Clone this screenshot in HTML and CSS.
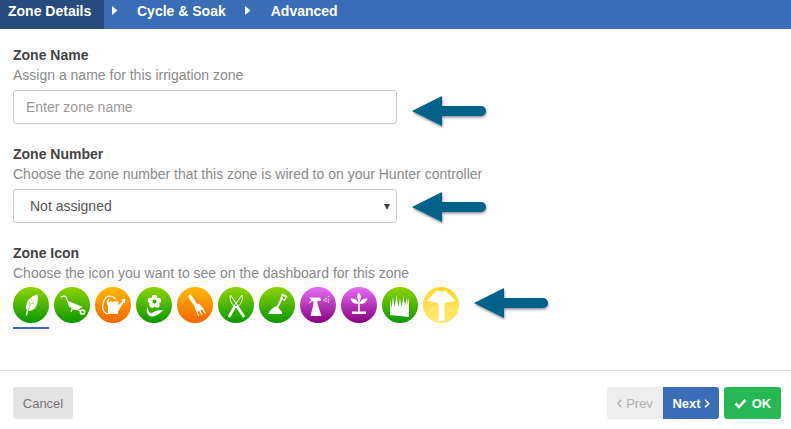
FILE: index.html
```html
<!DOCTYPE html>
<html lang="en">
<head>
<meta charset="utf-8">
<title>Zone Details</title>
<link rel="stylesheet" href="styles.css">
</head>
<body>
<svg class="defs" width="0" height="0" aria-hidden="true">
  <defs>
    <linearGradient id="green" x1="0" y1="0" x2="0" y2="1"><stop offset="0" stop-color="#8fd400"/><stop offset="1" stop-color="#0a9700"/></linearGradient>
    <linearGradient id="orange" x1="0" y1="0" x2="0" y2="1"><stop offset="0" stop-color="#ffb900"/><stop offset="1" stop-color="#f56500"/></linearGradient>
    <linearGradient id="purple" x1="0" y1="0" x2="0" y2="1"><stop offset="0" stop-color="#e86ef5"/><stop offset="1" stop-color="#85007f"/></linearGradient>
    <linearGradient id="yellow" x1="0" y1="0" x2="0" y2="1"><stop offset="0" stop-color="#ffd92a"/><stop offset="1" stop-color="#ffe96e"/></linearGradient>
    <filter id="arrowShadow" x="-20%" y="-30%" width="140%" height="170%"><feDropShadow dx="0.500" dy="1.500" stdDeviation="1.200" flood-color="#000" flood-opacity=".45"/></filter>
    <symbol id="arrow" viewBox="0 0 80 40"><path filter="url(#arrowShadow)" fill="#00628b" d="M2 20 32 5v10h39a5 5 0 0 1 0 10H32v10z"/></symbol>
  </defs>
</svg>

<nav class="tabs">
  <div class="tab tab-active">Zone Details</div>
  <svg class="chev chev-first" width="6" height="9" viewBox="0 0 6 9"><path d="M0 0l5.500 4.500L0 9z" fill="#fff"/></svg>
  <div class="tab">Cycle &amp; Soak</div>
  <svg class="chev chev-second" width="6" height="9" viewBox="0 0 6 9"><path d="M0 0l5.500 4.500L0 9z" fill="#fff"/></svg>
  <div class="tab">Advanced</div>
</nav>

<main class="form">
  <section class="field field-name">
    <h2 class="label">Zone Name</h2>
    <p class="help">Assign a name for this irrigation zone</p>
    <div class="control-row">
      <input class="control control-input" type="text" placeholder="Enter zone name">
      <svg class="arrow arrow-name" width="80" height="40"><use href="#arrow"/></svg>
    </div>
  </section>

  <section class="field field-number">
    <h2 class="label">Zone Number</h2>
    <p class="help">Choose the zone number that this zone is wired to on your Hunter controller</p>
    <div class="control-row">
      <div class="control select">Not assigned<span class="caret"></span></div>
      <svg class="arrow arrow-number" width="80" height="40"><use href="#arrow"/></svg>
    </div>
  </section>

  <section class="field field-icon">
    <h2 class="label">Zone Icon</h2>
    <p class="help">Choose the icon you want to see on the dashboard for this zone</p>
    <div class="icons">
      <div class="icon-cell icon-selected"><svg class="zone-icon" viewBox="0 0 36 36"><circle cx="18" cy="18" r="18" fill="url(#green)"/><path fill="#fff" d="M24.500 7c-6 2.500-11 6-11.500 12.500 0 2 .5 3.500 1.500 4.500 7 .5 11.500-5 10-17z"/><path fill="none" stroke="#6cc400" stroke-width=".6" d="M15 24c1.500-5 3.500-8.500 7-11.500M17 19l-.5-4M18.500 16l3 1"/><path fill="none" stroke="#fff" stroke-width="1.300" d="M14.500 23.500c-.5 2-.8 3-1 5"/></svg></div>
      <div class="icon-cell"><svg class="zone-icon" viewBox="0 0 36 36"><circle cx="18" cy="18" r="18" fill="url(#green)"/><path fill="none" stroke="#fff" stroke-width="1.200" stroke-linecap="round" d="M7 10c2-1 4-1 5 0l4 10"/><path fill="#fff" d="M14 14l15 6-6 3-5-.5z"/><path fill="none" stroke="#fff" stroke-width="1.200" d="M18 22l-1 3M23 22l4 2.500"/><circle cx="28.500" cy="25" r="2.100" fill="none" stroke="#fff" stroke-width="1.500"/></svg></div>
      <div class="icon-cell"><svg class="zone-icon" viewBox="0 0 36 36"><circle cx="18" cy="18" r="18" fill="url(#orange)"/><path fill="#fff" d="M13 14.500h10.500v4l4-4.500-1.500-1 4.500-1.500-1 5-1-1-5.500 9V27H13z"/><path fill="none" stroke="#fff" stroke-width="1.200" d="M10.500 10.500c4-2 8-1.500 10 2M13 27c-5-1-6-6-5-10 .5-3 1.500-5 3-6.500M14 12c-2 2-2 5 0 7"/></svg></div>
      <div class="icon-cell"><svg class="zone-icon" viewBox="0 0 36 36"><circle cx="18" cy="18" r="18" fill="url(#green)"/><g fill="#fff"><circle cx="18.500" cy="10.500" r="2.700"/><circle cx="22.500" cy="13.500" r="2.700"/><circle cx="21" cy="18" r="2.700"/><circle cx="16" cy="18" r="2.700"/><circle cx="14.500" cy="13.500" r="2.700"/></g><circle cx="18.500" cy="14.500" r="2" fill="#36ac00"/><path fill="#fff" d="M11.500 20c-2 5 0 9 4.500 9.500 4.500 0 8-3.500 11.500-6.500-3 .5-5 0-8 1-2 1.500-4.500 2.500-5.500 1.500-1.500-1-2-3-2.500-5.500z"/></svg></div>
      <div class="icon-cell"><svg class="zone-icon" viewBox="0 0 36 36"><circle cx="18" cy="18" r="18" fill="url(#orange)"/><path fill="none" stroke="#fff" stroke-width="3.600" stroke-linecap="round" d="M13 9.500l6.500 9.500"/><path fill="#fff" d="M17.500 20l4.500-3.500 5 5.500-7.500 3z"/><path fill="none" stroke="#fff" stroke-width="1.200" d="M20 24l1.500 5M22.500 23l2.500 5M25 21.500l3.500 5"/></svg></div>
      <div class="icon-cell"><svg class="zone-icon" viewBox="0 0 36 36"><circle cx="18" cy="18" r="18" fill="url(#green)"/><g fill="none" stroke="#fff" stroke-linecap="round"><path stroke-width="2.800" d="M19.500 20l6 9M16.500 20l-5 9"/><path stroke-width="1" d="M20 19L12.500 8c-1 4 0 9 5 12zM16 19l8-11c1 4 0 9-5 12z"/></g></svg></div>
      <div class="icon-cell"><svg class="zone-icon" viewBox="0 0 36 36"><circle cx="18" cy="18" r="18" fill="url(#green)"/><path fill="#fff" d="M9 27c2-4 5-7 9-8l5 6v2z"/><path fill="none" stroke="#fff" stroke-width="1.800" d="M18.500 20l5-10"/><path fill="none" stroke="#fff" stroke-width="1.400" d="M22 11l1.500-3.500 4 2-2 3.500z"/></svg></div>
      <div class="icon-cell"><svg class="zone-icon" viewBox="0 0 36 36"><circle cx="18" cy="18" r="18" fill="url(#purple)"/><path fill="#fff" d="M9 10.500h11l1.500 3-4 .5v3l4 12H10.500l3-12v-3l-2 .5-2 2-.5-1 2.500-2.500z"/><g fill="#fff"><circle cx="24" cy="13" r=".8"/><circle cx="26" cy="11.500" r=".8"/><circle cx="26" cy="14" r=".8"/><circle cx="28.500" cy="9.500" r=".8"/><circle cx="28.500" cy="12.500" r=".8"/><circle cx="28.500" cy="15" r=".8"/></g></svg></div>
      <div class="icon-cell"><svg class="zone-icon" viewBox="0 0 36 36"><circle cx="18" cy="18" r="18" fill="url(#purple)"/><g fill="#fff"><path d="M18 6c2.500 2 2.500 5.500 0 8.500-2.500-3-2.500-6.500 0-8.500z"/><path d="M9.500 11.500c4-.5 7 1.500 8 5-4 1-7-1-8-5zM26.500 11.500c-4-.5-7 1.500-8 5 4 1 7-1 8-5z"/><path d="M17.200 13h1.600v12h-1.600z"/><path d="M11 24.500h14V27H11z"/></g></svg></div>
      <div class="icon-cell"><svg class="zone-icon" viewBox="0 0 36 36"><circle cx="18" cy="18" r="18" fill="url(#green)"/><path fill="#fff" d="M8 28V12l1.500 9 1.500-11 1.500 10 2-12 2 12 1.500-9 1.500 9 2-11 1.500 10 2-9 .5 8 1.500-8v20z"/></svg></div>
      <div class="icon-cell"><svg class="zone-icon" viewBox="0 0 36 36"><circle cx="18" cy="18" r="18" fill="url(#yellow)"/><path fill="#fff" d="M13 4h10l9.500 10c-4 1-8 1-11 2.500V34h-6V16.500C12.500 15 8 15 3.500 14z"/><g fill="none" stroke="#fff" stroke-width=".8" stroke-dasharray="1.500 1"><path d="M7 22l6-3M8 25l5-3M29 22l-6-3M28 25l-5-3"/></g></svg></div>
      <svg class="arrow arrow-icons" width="80" height="40"><use href="#arrow"/></svg>
    </div>
  </section>
</main>

<footer class="footer">
  <button class="btn btn-cancel" type="button">Cancel</button>
  <div class="footer-right">
    <div class="btn-group">
      <button class="btn btn-prev" type="button"><svg width="5" height="9" viewBox="0 0 5 9"><path d="M4.300.8.800 4.500l3.500 3.700" fill="none" stroke="#b0b0b0" stroke-width="1.400"/></svg>Prev</button>
      <button class="btn btn-next" type="button">Next<svg width="6" height="9" viewBox="0 0 6 9"><path d="M1 .8l3.700 3.700L1 8.200" fill="none" stroke="#fff" stroke-width="1.600"/></svg></button>
    </div>
    <button class="btn btn-ok" type="button"><svg width="13" height="11" viewBox="0 0 13 11"><path d="M1.500 5.500l3.500 3.500 6.500-7" fill="none" stroke="#fff" stroke-width="2.600"/></svg>OK</button>
  </div>
</footer>
</body>
</html>
```

FILE: styles.css
```css
* { box-sizing: border-box; }
html, body { margin: 0; padding: 0; }
body {
  width: 791px;
  height: 429px;
  overflow: hidden;
  background: #fff;
  font-family: "Liberation Sans", Arial, sans-serif;
  font-size: 14px;
  color: #333;
  display: flex;
  flex-direction: column;
}
.defs { position: absolute; }

.tabs {
  height: 29px;
  flex: none;
  display: flex;
  align-items: center;
  background: #3a6db5;
  color: #fff;
  font-weight: 700;
  font-size: 14px;
}
.tab { height: 100%; display: flex; align-items: center; padding-bottom: 7px; }
.tab-active {
  width: 104px;
  padding-left: 8px;
  background: #264b7c;
}
.chev { margin-top: -9px; }
.chev-first { margin-left: 8px; margin-right: 19px; }
.chev-second { margin-left: 19px; margin-right: 20px; }

.form { flex: 1; padding: 0 13px; }
.field { display: block; }
.field-name { padding-top: 18px; }
.field-number { padding-top: 22px; }
.field-icon { padding-top: 22px; }
.label { margin: 0; font-size: 14px; line-height: 17px; font-weight: 700; color: #444; }
.help { margin: 3px 0 0; font-size: 14px; line-height: 17px; color: #8a8a8a; }

.control-row { display: flex; align-items: center; margin-top: 6px; height: 34px; }
.control {
  width: 384px;
  height: 34px;
  border: 1px solid #ccc;
  border-radius: 3px;
  padding: 0 16px;
  font: 14px "Liberation Sans", Arial, sans-serif;
  color: #555;
  background: #fff;
  outline: 0;
}
.control-input { padding-left: 12px; }
.control::placeholder { color: #999; opacity: 1; }
.select { display: flex; align-items: center; justify-content: space-between; padding-right: 6px; }
.caret { width: 0; height: 0; margin-top: 1px; border-left: 3px solid transparent; border-right: 3px solid transparent; border-top: 6px solid #444; }
.arrow { flex: none; margin-left: 13px; }
.arrow-name { margin-top: 8px; }
.arrow-number { margin-top: 2px; }

.icons { display: flex; align-items: flex-start; gap: 5px; margin-top: 5px; height: 42px; }
.icon-cell { width: 36px; height: 42px; }
.icon-selected { border-bottom: 2px solid #3a6db5; }
.zone-icon { display: block; width: 36px; height: 36px; }
.arrow-icons { margin: -4px 0 0 8px; }

.footer {
  flex: none;
  height: 59px;
  border-top: 1px solid #ddd;
  padding: 16px 10px 0 13px;
  display: flex;
  justify-content: space-between;
  align-items: flex-start;
}
.footer-right { display: flex; gap: 5px; }
.btn-group { display: flex; }
.btn {
  height: 32px;
  border: 0;
  border-radius: 3px;
  padding: 0;
  font: 13px "Liberation Sans", Arial, sans-serif;
  display: flex;
  align-items: center;
  justify-content: center;
}
.btn-cancel { width: 60px; background: #e3e3e3; color: #777; }
.btn-prev { width: 56px; gap: 4px; background: #eee; color: #b0b0b0; border-radius: 3px 0 0 3px; }
.btn-next { width: 56px; gap: 3px; background: #3a6db5; color: #fff; border-radius: 0 3px 3px 0; font-weight: 700; }
.btn-ok { width: 57px; background: #27b855; color: #fff; font-weight: 700; gap: 5px; }
```
